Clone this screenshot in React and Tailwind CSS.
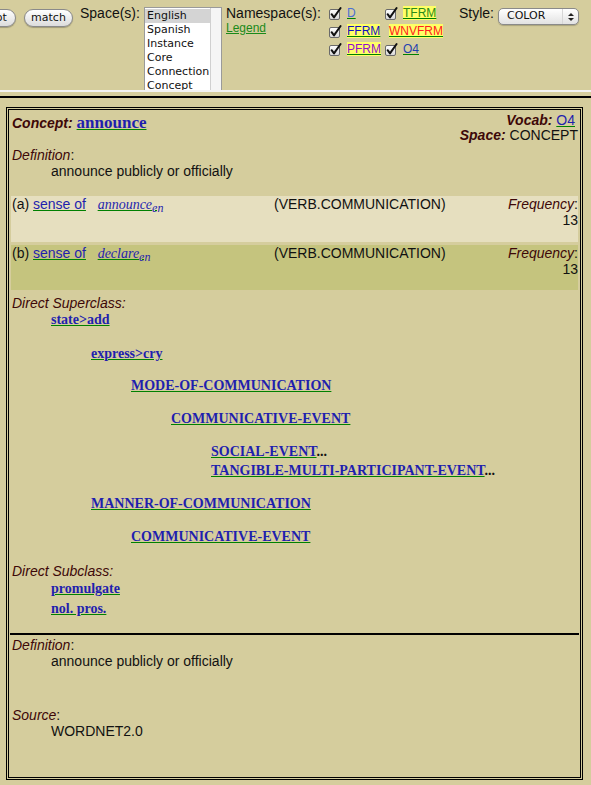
import React from "react";

const SANS = "font-['Liberation_Sans',Arial,sans-serif]";
const SERIF = "font-['Liberation_Serif','Times_New_Roman',serif]";
const UI = "font-['DejaVu_Sans',sans-serif]";
const LINK = "text-[#1f1fae] underline decoration-[#008000]";
const LBL = "italic text-[#3d0808]";

function Check() {
  return (
    <svg width="14" height="14" viewBox="0 0 14 14" className="block">
      <defs>
        <linearGradient id="cbg" x1="0" y1="0" x2="0" y2="1">
          <stop offset="0" stopColor="#ffffff" />
          <stop offset="1" stopColor="#d8d8d8" />
        </linearGradient>
      </defs>
      <rect x="0.5" y="3.5" width="10" height="10" rx="1.5" fill="url(#cbg)" stroke="#6a6a6a" />
      <path d="M2.6 8.2 L5 11.4 L11.6 2" fill="none" stroke="#111" strokeWidth="2" strokeLinecap="round" strokeLinejoin="round" />
    </svg>
  );
}

function NsRow({ children }) {
  return <div className="h-[18px] flex items-center">{children}</div>;
}

function Ns({ label, cls }) {
  return (
    <div className="flex items-center w-[56px]">
      <Check />
      <span className={`ml-[4px] text-[12px] leading-[14px] underline decoration-[#008000] ${cls}`}>{label}</span>
    </div>
  );
}

function TopFrame() {
  return (
    <div className={`h-[90px] overflow-hidden flex items-start ${SANS} text-[14px] text-[#111]`}>
      <div className={`ml-[-40px] mt-[9px] h-[18px] w-[56px] rounded-full border border-[#8a8a8a] bg-gradient-to-b from-white to-[#dcdcdc] shadow-[0_1px_1px_rgba(0,0,0,0.25)] flex items-center justify-center ${UI} text-[11px] shrink-0`}>
        Accept
      </div>
      <div className={`ml-[8px] mt-[9px] h-[18px] w-[49px] rounded-full border border-[#8a8a8a] bg-gradient-to-b from-white to-[#dcdcdc] shadow-[0_1px_1px_rgba(0,0,0,0.25)] flex items-center justify-center ${UI} text-[11px] shrink-0`}>
        match
      </div>
      <div className="ml-[7px] mt-[5px] w-[64px] leading-[16px] shrink-0">Space(s):</div>
      <div className="mt-[7px] w-[78px] h-[100px] border border-[#9a9a9a] bg-white flex shrink-0">
        <div className={`flex-1 pt-[1px] ${UI} text-[11px] leading-[14px] text-[#111]`}>
          <div className="bg-[#d4d4d4] pl-[2px]">English</div>
          <div className="pl-[2px]">Spanish</div>
          <div className="pl-[2px]">Instance</div>
          <div className="pl-[2px]">Core</div>
          <div className="pl-[2px]">Connection</div>
          <div className="pl-[2px]">Concept</div>
        </div>
        <div className="w-[11px] border-l border-[#d0d0d0] bg-[#f5f5f5]"></div>
      </div>
      <div className="ml-[4px] mt-[5px] w-[103px] shrink-0">
        <div className="leading-[16px]">Namespace(s):</div>
        <div className="text-[12px] leading-[14px] text-[#1a8a1a] underline decoration-[#1a8a1a]">Legend</div>
      </div>
      <div className="mt-[4px] shrink-0">
        <NsRow>
          <Ns label="D" cls="text-[#4a6fd4]" />
          <Ns label="TFRM" cls="text-[#2a8a1a] bg-[#ffff66]" />
        </NsRow>
        <NsRow>
          <Ns label="FFRM" cls="text-[#1010c0] bg-[#ffff66]" />
          <Ns label="WNVFRM" cls="text-[#ff2020] bg-[#ffff66]" />
        </NsRow>
        <NsRow>
          <Ns label="PFRM" cls="text-[#9010d0] bg-[#ffff66]" />
          <Ns label="O4" cls="text-[#1f3fb0]" />
        </NsRow>
      </div>
      <div className="ml-[18px] mt-[5px] w-[39px] leading-[16px] shrink-0">Style:</div>
      <div className={`mt-[8px] w-[81px] h-[17px] rounded-[5px] border border-[#8a8a8a] bg-gradient-to-b from-white to-[#e2e2e2] shadow-[0_1px_1px_rgba(0,0,0,0.2)] flex items-center shrink-0 ${UI} text-[11px]`}>
        <span className="pl-[8px] flex-1">COLOR</span>
        <div className="w-[16px] h-full border-l border-[#d6d6d6] flex flex-col items-center justify-center gap-[2px]">
          <svg width="6" height="3" viewBox="0 0 6 3"><path d="M0 3 L3 0 L6 3 Z" fill="#222" /></svg>
          <svg width="6" height="3" viewBox="0 0 6 3"><path d="M0 0 L3 3 L6 0 Z" fill="#222" /></svg>
        </div>
      </div>
    </div>
  );
}

function TreeLink({ indent, mt, children, more }) {
  return (
    <div className={`${indent} ${mt} h-[16px] leading-[16px] ${SERIF} font-bold`}>
      <span className={LINK}>{children}</span>
      {more ? <span>...</span> : null}
    </div>
  );
}

function SenseRow({ letter, word, bg, mt, h }) {
  return (
    <div className={`${mt} ${h} ${bg} flex leading-[16px]`}>
      <div className="w-[263px] shrink-0 pl-[1px] h-[16px]">
        ({letter}) <span className={LINK}>sense of</span>&nbsp;&nbsp;{" "}
        <span className={`${SERIF} italic ${LINK}`}>
          {word}
          <sub className="text-[12px]">en</sub>
        </span>
      </div>
      <div className="flex-1">(VERB.COMMUNICATION)</div>
      <div className="text-right">
        <span className={LBL}>Frequency</span>:
        <br />
        13
      </div>
    </div>
  );
}

export default function App() {
  return (
    <div className={`w-[591px] h-[785px] overflow-hidden bg-[#d5cd9d] ${SANS}`}>
      <TopFrame />
      <div className="h-[2px] bg-[#f2f2f2]"></div>
      <div className="h-[4px]"></div>
      <div className="h-[2px] bg-black"></div>
      <div className="ml-[6px] mt-[9px] w-[577px] border border-black p-px">
        <div className="border border-black p-[2px] pb-[38px] text-[14px] text-[#111]">
          <div className="flex justify-between items-start">
            <div className="pl-[1px] pt-[1px] leading-[20px]">
              <span className={`font-bold ${LBL}`}>Concept:</span>{" "}
              <span className={`${SERIF} font-bold text-[17px] ${LINK}`}>announce</span>
            </div>
            <div className="text-right leading-[15px] pt-[1px]">
              <div className="pr-[3px]">
                <span className={`font-bold ${LBL}`}>Vocab:</span> <span className={LINK}>O4</span>
              </div>
              <div>
                <span className={`font-bold ${LBL}`}>Space:</span> CONCEPT
              </div>
            </div>
          </div>
          <div className="mt-[4px] leading-[16px] pl-[1px]">
            <span className={LBL}>Definition</span>:
          </div>
          <div className="leading-[16px] pl-[40px]">announce publicly or officially</div>

          <SenseRow letter="a" word="announce" bg="bg-[#e6dfbf]" mt="mt-[17px]" h="h-[46px]" />
          <SenseRow letter="b" word="declare" bg="bg-[#c5c47e]" mt="mt-[3px]" h="h-[45px]" />

          <div className="mt-[5px] leading-[16px] pl-[1px]">
            <span className={LBL}>Direct Superclass:</span>
          </div>
          <TreeLink indent="pl-[40px]" mt="mt-[1px]">state&gt;add</TreeLink>
          <TreeLink indent="pl-[80px]" mt="mt-[18px]">express&gt;cry</TreeLink>
          <TreeLink indent="pl-[120px]" mt="mt-[16px]">MODE-OF-COMMUNICATION</TreeLink>
          <TreeLink indent="pl-[160px]" mt="mt-[17px]">COMMUNICATIVE-EVENT</TreeLink>
          <TreeLink indent="pl-[200px]" mt="mt-[17px]" more>SOCIAL-EVENT</TreeLink>
          <TreeLink indent="pl-[200px]" mt="mt-[3px]" more>TANGIBLE-MULTI-PARTICIPANT-EVENT</TreeLink>
          <TreeLink indent="pl-[80px]" mt="mt-[17px]">MANNER-OF-COMMUNICATION</TreeLink>
          <TreeLink indent="pl-[120px]" mt="mt-[17px]">COMMUNICATIVE-EVENT</TreeLink>

          <div className="mt-[18px] leading-[16px] pl-[1px]">
            <span className={LBL}>Direct Subclass:</span>
          </div>
          <TreeLink indent="pl-[40px]" mt="mt-[2px]">promulgate</TreeLink>
          <TreeLink indent="pl-[40px]" mt="mt-[4px]">nol. pros.</TreeLink>

          <div className="mt-[16px] -mx-[1px] h-[2px] bg-black"></div>

          <div className="mt-[2px] leading-[16px] pl-[1px]">
            <span className={LBL}>Definition</span>:
          </div>
          <div className="leading-[16px] pl-[40px]">announce publicly or officially</div>
          <div className="mt-[38px] leading-[16px] pl-[1px]">
            <span className={LBL}>Source</span>:
          </div>
          <div className="leading-[16px] pl-[40px]">WORDNET2.0</div>
        </div>
      </div>
    </div>
  );
}
